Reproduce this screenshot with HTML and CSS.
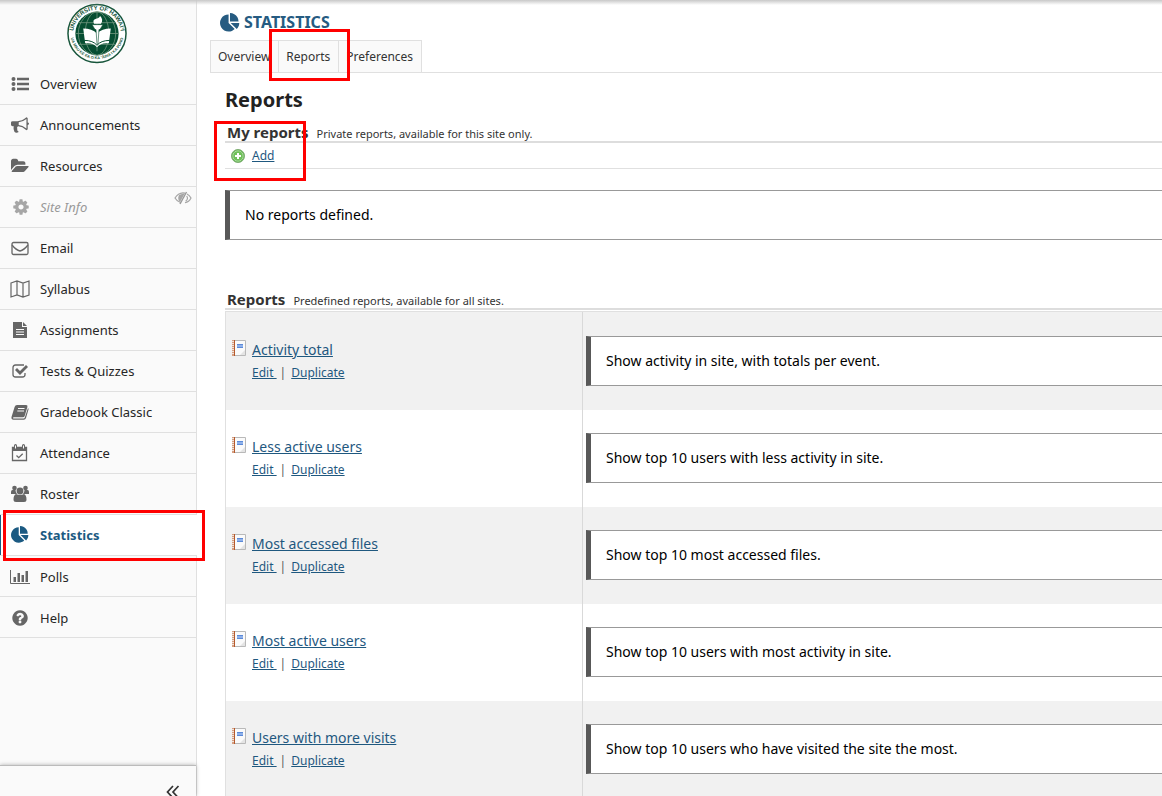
FILE: index.html
```html
<!DOCTYPE html>
<html lang="en">
<head>
<meta charset="utf-8">
<title>Statistics - Reports</title>
<link rel="stylesheet" href="styles.css">
</head>
<body>
<svg class="defs" aria-hidden="true">
  <symbol id="pie" viewBox="0 0 1792 1792"><path d="M768 890l546 546q-106 108-247.500 168t-298.500 60q-209 0-385.500-103t-279.500-279.500-103-385.500 103-385.500 279.500-279.500 385.500-103v762zm187 6h773q0 157-60 298.500t-168 247.500zm709-128h-768v-768q209 0 385.500 103t279.500 279.500 103 385.500z"/></symbol>
  <symbol id="notebook" viewBox="0 0 16 16">
    <path d="M3 .5h11.500v15H3z" fill="#fafafa" stroke="#b9b9b9"/>
    <path d="M1 0h3v16H1z" fill="#d5a083"/>
    <path d="M1 1.500h2M1 3.500h2M1 5.500h2M1 7.500h2M1 9.500h2M1 11.500h2M1 13.500h2" stroke="#f0e4dc"/>
    <path d="M3.500 0v16" stroke="#b5592c"/>
    <path d="M6 4h6v4H6z" fill="#8fb1ea"/><path d="M6 4.500h6M6 7.500h6" stroke="#5c8ad8"/>
    <path d="M9 15l5-5v5z" fill="#e4e4e4"/>
  </symbol>
</svg>
<div class="page">
  <aside class="sidebar">
    <svg class="logo" viewBox="0 0 62 62" role="img" aria-label="University of Hawaii">
      <defs><path id="arc-top" d="M7.500 37A24.200 24.200 0 1 1 54.500 37"/><path id="arc-bottom" d="M4.500 36A27.200 27.200 0 0 0 57.500 36"/></defs>
      <circle cx="31" cy="31" r="29.500" fill="#fff" stroke="#17553b" stroke-width="1.500"/>
      <circle cx="31" cy="31" r="22" fill="#064e32"/>
      <g fill="none" stroke="#71967f" stroke-width=".8"><path d="M31 9v44M9 31h44M12 20h38M12 42h38"/><ellipse cx="31" cy="31" rx="12" ry="22"/><ellipse cx="31" cy="31" rx="19" ry="22"/></g>
      <path d="M17 26q9 0 14 5q5-5 14-5l-2 15q-8-1-12 4q-4-5-12-4z" fill="#fff"/>
      <path d="M18 38q9 0 13 5q4-5 13-5" fill="none" stroke="#064e32"/>
      <path d="M26 22h11l-3 5h-1l-1 15h-1l-1-15h-1z" fill="#fff" stroke="#064e32" stroke-width=".6"/>
      <path d="M28 21q-2-4 2-5q4-1 4-3q4 4 1 8z" fill="#fff"/>
      <path d="M28 49h6l-3 4z" fill="#064e32"/>
      <text class="seal-text"><textPath href="#arc-top" startOffset="50%" text-anchor="middle">UNIVERSITY OF HAWAI‘I</textPath></text>
      <text class="seal-motto"><textPath href="#arc-bottom" startOffset="50%" text-anchor="middle">UA MAU KE EA O KA ʻĀINA I KA PONO</textPath></text>
    </svg>
    <nav>
      <ul class="tools">
        <li><a href="#"><svg viewBox="0 0 18 18"><circle cx="2.500" cy="4" r="2"/><circle cx="2.500" cy="9" r="2"/><circle cx="2.500" cy="14" r="2"/><path d="M6 2.700h12v2.600H6zM6 7.700h12v2.600H6zM6 12.700h12v2.600H6z"/></svg>Overview</a></li>
        <li><a href="#"><svg viewBox="0 0 1792 1792"><path d="M1664 640q53 0 90.500 37.500t37.500 90.500-37.500 90.500-90.500 37.500v384q0 52-38 90t-90 38q-417-347-812-380-58 19-91 66t-31 100.500 40 92.500q-20 33-23 65.500t6 58 33.500 55 48 50 61.500 50.500q-29 58-111.500 83t-168.500 11.500-132-55.500q-7-23-29.500-87.500t-32-94.500-23-89-15-101 3.500-98.500 22-110.500h-122q-66 0-113-47t-47-113v-192q0-66 47-113t113-47h480q435 0 896-384 52 0 90 38t38 90v384zm-128 604v-954q-394 302-768 343v270q377 42 768 341z"/></svg>Announcements</a></li>
        <li><a href="#"><svg viewBox="0 0 1920 1792"><path d="M1879 952q0 31-31 66l-336 396q-43 51-120.500 86.500t-143.500 35.500h-1088q-34 0-60.500-13t-26.500-43q0-31 31-66l336-396q43-51 120.500-86.500t143.500-35.500h1088q34 0 60.500 13t26.500 43zm-343-344v160h-832q-94 0-197 47.500t-164 119.500l-337 396-5 6q0-4-.5-12.500t-.5-12.500v-960q0-92 66-158t158-66h320q92 0 158 66t66 158v32h544q92 0 158 66t66 158z"/></svg>Resources</a></li>
        <li class="hidden-tool"><a href="#"><svg viewBox="-100 0 1792 1792"><path d="M1152 896q0-106-75-181t-181-75-181 75-75 181 75 181 181 75 181-75 75-181zm512-109v222q0 12-8 23t-20 13l-185 28q-19 54-39 91 35 50 107 138 10 12 10 25t-9 23q-27 37-99 108t-94 71q-12 0-26-9l-138-108q-44 23-91 38-16 136-29 186-7 28-36 28h-222q-14 0-24.500-8.500t-11.500-21.500l-28-184q-49-16-90-37l-141 107q-10 9-25 9-14 0-25-11-126-114-165-168-7-10-7-23 0-12 8-23 15-21 51-66.500t54-70.500q-27-50-41-99l-183-27q-13-2-21-12.500t-8-23.500v-222q0-12 8-23t19-13l186-28q14-46 39-92-40-57-107-138-10-12-10-24 0-10 9-23 26-36 98.500-107.500t94.500-71.500q13 0 26 10l138 107q44-23 91-38 16-136 29-186 7-28 36-28h222q14 0 24.500 8.500t11.500 21.500l28 184q49 16 90 37l142-107q9-9 24-9 13 0 25 10 129 119 165 170 7 8 7 22 0 12-8 23-15 21-51 66.500t-54 70.500q26 50 41 98l183 28q13 2 21 12.500t8 23.500z"/></svg>Site Info</a>
          <svg class="eye" viewBox="0 0 18 14"><path d="M6.500 11.500Q3 10.500 1 7q3-5 8-5.200l2 .2M13 3q2.500 1.200 4 4-2 4-6 4.700M12.700 5q2 3-1 5" fill="none" stroke="#a6a6a6" stroke-width="1.200"/><path d="M5 4l6-2-5 9q-3-3-1-7z" fill="#a6a6a6"/><path d="M12.500 1L6 13" stroke="#999" stroke-width="1.400"/></svg></li>
        <li><a href="#"><svg class="line" viewBox="0 0 18 18"><rect x="1" y="3.500" width="16" height="12" rx="1.500"/><path d="M1 6q4 5 8 6q4-1 8-6"/></svg>Email</a></li>
        <li><a href="#"><svg class="line wide" viewBox="0 0 20 18"><path d="M1 3l6-2 6 2 6-2v14l-6 2-6-2-6 2zM7 1v14M13 3v14" stroke-width="1.200"/></svg>Syllabus</a></li>
        <li><a href="#"><svg viewBox="0 0 18 18"><path d="M2 1h9v5h5v11H2zM12 1l4 4h-4z"/><path d="M5 8.500h8M5 11h8M5 13.500h8" stroke="#fafafa"/></svg>Assignments</a></li>
        <li><a href="#"><svg viewBox="0 0 18 18"><path d="M13 3H4.500Q2 3 2 5.500v7Q2 15 4.500 15h7q2.500 0 2.500-2.500V11" fill="none" stroke="#666" stroke-width="1.300"/><path d="M4 8L6 6l3 3 6-6 2 2-8 8z"/></svg>Tests &amp; Quizzes</a></li>
        <li><a href="#"><svg viewBox="0 0 18 18"><path d="M6 2h9q2 0 1.400 2l-2.700 9q-.4 1.300-2 1.300H3q-1.200 0-1 .7.200.6 1 .6h9.500q1 0 1.300-1L17 5q.8.500.5 1.500L15 15q-.5 1.700-2.200 1.700H2.500Q0 16.500.5 14L3.600 4Q4.200 2 6 2z"/><path d="M7 5.500h6.500M6.300 8H13" stroke="#fafafa"/></svg>Gradebook Classic</a></li>
        <li><a href="#"><svg viewBox="0 0 18 18"><path d="M1.500 3.500h14v13h-14z" fill="none" stroke="#666" stroke-width="1.300"/><path d="M1 3h15v4H1z"/><path d="M4.500 1.500v3M12.500 1.500v3" stroke="#666" stroke-width="3" stroke-linecap="round"/><path d="M4.500 1.500v3M12.500 1.500v3" stroke="#fafafa"/><path d="M5.500 11.500l2.200 2.200 4-4" fill="none" stroke="#666" stroke-width="1.300"/></svg>Attendance</a></li>
        <li><a href="#"><svg viewBox="0 0 18 18"><circle cx="3.500" cy="3" r="2.300"/><circle cx="14.500" cy="3" r="2.300"/><circle cx="9" cy="6" r="3.400"/><path d="M0 9V7q0-2 1.500-2h3q0 2 1.500 4zM18 9V7q0-2-1.500-2h-3q0 2-1.500 4zM5 9q4 2 8 0 2.500 1 2.500 5.500 0 2.500-2.500 2.500H5q-2.500 0-2.500-2.500Q2.500 10 5 9z"/></svg>Roster</a></li>
        <li class="current"><a href="#" aria-current="page"><svg><use href="#pie"/></svg>Statistics</a></li>
        <li><a href="#"><svg class="wide" viewBox="0 0 20 18"><path d="M.5 2v13.500H20" fill="none" stroke="#666"/><path d="M3.500 9h2.500v5H3.500zM7.500 5H10v9H7.500zM11.500 7H14v7h-2.500zM15.500 3H18v11h-2.500z"/></svg>Polls</a></li>
        <li><a href="#"><svg viewBox="0 0 1792 1792"><path d="M1024 1376v-192q0-14-9-23t-23-9h-192q-14 0-23 9t-9 23v192q0 14 9 23t23 9h192q14 0 23-9t9-23zm256-672q0-88-55.500-163t-138.500-116-170-41q-243 0-371 213-15 24 8 42l132 100q7 6 19 6 16 0 25-12 53-68 86-92 34-24 86-24 48 0 85.500 26t37.500 59q0 38-20 61t-68 45q-63 28-115.500 86.500t-52.500 125.500v36q0 14 9 23t23 9h192q14 0 23-9t9-23q0-19 21.500-49.500t54.500-49.500q32-18 49-28.500t46-35 44.500-48 28-60.500 12.500-81zm384 192q0 209-103 385.500t-279.500 279.500-385.500 103-385.500-103-279.500-279.500-103-385.500 103-385.500 279.500-279.500 385.500-103 385.500 103 279.500 279.500 103 385.500z"/></svg>Help</a></li>
      </ul>
    </nav>
    <button class="collapse" type="button" aria-label="Collapse menu"><svg viewBox="0 0 14 14"><path d="M7 1L1.500 7 7 13M12.500 1L7 7l5.500 6" fill="none" stroke="#333" stroke-width="1.700"/></svg></button>
  </aside>
  <main class="main">
    <h1 class="tool-title"><svg><use href="#pie"/></svg>STATISTICS</h1>
    <ul class="tabs">
      <li><a href="#">Overview</a></li>
      <li><a href="#">Reports</a><span class="mark mark-tab"></span></li>
      <li><a href="#">Preferences</a></li>
    </ul>
    <div class="content">
      <h2 class="page-title">Reports</h2>
      <section class="mine">
        <div class="heading"><h3>My reports</h3><span>Private reports, available for this site only.</span></div>
        <div class="actions">
          <svg viewBox="0 0 14 14"><circle cx="7" cy="7" r="6.500" fill="#58ad45" stroke="#7fae74"/><circle cx="7" cy="7" r="5.200" fill="#6fc05a" stroke="#a9dc9c"/><path d="M7 4v6M4 7h6" stroke="#fff" stroke-width="2"/></svg>
          <a href="#">Add</a>
        </div>
        <span class="mark mark-add"></span>
      </section>
      <p class="note">No reports defined.</p>
      <section class="predefined">
        <div class="heading"><h3>Reports</h3><span>Predefined reports, available for all sites.</span></div>
        <table class="reports">
          <tbody>
          <tr><td class="name"><div class="entry"><svg><use href="#notebook"/></svg><div><a class="title" href="#">Activity total</a><div class="links"><a href="#">Edit&nbsp;</a><span>|</span><a href="#">Duplicate</a></div></div></div></td><td><p class="note">Show activity in site, with totals per event.</p></td></tr>
          <tr><td class="name"><div class="entry"><svg><use href="#notebook"/></svg><div><a class="title" href="#">Less active users</a><div class="links"><a href="#">Edit&nbsp;</a><span>|</span><a href="#">Duplicate</a></div></div></div></td><td><p class="note">Show top 10 users with less activity in site.</p></td></tr>
          <tr><td class="name"><div class="entry"><svg><use href="#notebook"/></svg><div><a class="title" href="#">Most accessed files</a><div class="links"><a href="#">Edit&nbsp;</a><span>|</span><a href="#">Duplicate</a></div></div></div></td><td><p class="note">Show top 10 most accessed files.</p></td></tr>
          <tr><td class="name"><div class="entry"><svg><use href="#notebook"/></svg><div><a class="title" href="#">Most active users</a><div class="links"><a href="#">Edit&nbsp;</a><span>|</span><a href="#">Duplicate</a></div></div></div></td><td><p class="note">Show top 10 users with most activity in site.</p></td></tr>
          <tr><td class="name"><div class="entry"><svg><use href="#notebook"/></svg><div><a class="title" href="#">Users with more visits</a><div class="links"><a href="#">Edit&nbsp;</a><span>|</span><a href="#">Duplicate</a></div></div></div></td><td><p class="note">Show top 10 users who have visited the site the most.</p></td></tr>
          </tbody>
        </table>
      </section>
    </div>
  </main>
  <div class="top-shadow"></div>
</div>
</body>
</html>
```
FILE: styles.css
```css
*, *::after { box-sizing: border-box; }
body { margin: 0; font-family: "Noto Sans", "Open Sans", sans-serif; font-size: 14px; line-height: 20px; color: #111; background: #fff; }
h1, h2, h3, p, ul { margin: 0; padding: 0; }
ul { list-style: none; }
a { color: #1f587f; }
.defs { position: absolute; width: 0; height: 0; }
.page { position: relative; display: flex; height: 100vh; overflow: hidden; }
.top-shadow { position: absolute; top: 0; left: 0; right: 0; height: 5px; background: linear-gradient(#c8c8c8, rgba(220, 220, 220, 0)); }

.sidebar { display: flex; flex-direction: column; flex: none; width: 197px; padding-top: 3px; background: #fafafa; border-right: 1px solid #e0e0e0; }
.logo { display: block; flex: none; width: 62px; height: 61px; margin-left: 66px; }
.seal-text { font: bold 6px "Liberation Sans", sans-serif; fill: #17553b; }
.seal-motto { font: bold 4px "Liberation Sans", sans-serif; fill: #17553b; }
.tools li { position: relative; border-bottom: 1px solid #e0e0e0; }
.tools a { display: flex; align-items: center; height: 40px; padding-left: 11px; gap: 11px; font-size: 13px; color: #262626; text-decoration: none; }
.tools a svg { flex: none; width: 18px; height: 18px; fill: #666; }
.tools a .wide { width: 20px; margin: 0 -1px; }
.tools a .line { fill: none; stroke: #666; stroke-width: 1.3; }
.tools .hidden-tool a { color: #999; font-style: italic; }
.tools .hidden-tool a svg { fill: #a6a6a6; }
.tools .eye { position: absolute; top: 4px; right: 4px; width: 18px; height: 14px; }
.tools .current { margin-right: -1px; background: #fff; }
.tools .current a { border-left: 1px solid #1b5a82; padding-left: 10px; font-weight: bold; color: #1b5a82; }
.tools .current svg { fill: #1b5a82; }
.tools .current ~ li a { padding-top: 2px; }
.tools .current::after { content: ""; position: absolute; top: -5px; left: 3px; width: 202px; height: 51px; border: 3px solid #f00; z-index: 2; }
.collapse { display: flex; justify-content: flex-end; align-items: flex-end; flex: none; height: 31px; margin-top: auto; padding: 0 16px 0 0; border: 0; border-top: 1px solid #bbb; background: #fafafa; box-shadow: 0 0 4px rgba(0, 0, 0, .3); overflow: visible; }
.collapse svg { width: 14px; height: 14px; margin-bottom: -3px; }

.main { flex: 1; min-width: 0; padding: 12px 0 0 13px; }
.tool-title { display: flex; align-items: center; gap: 4px; height: 20px; margin: 0 0 8px 10px; font-size: 16px; line-height: 20px; color: #265b81; }
.tool-title svg { width: 20px; height: 20px; margin-top: 2px; fill: #265b81; }
.tabs { display: flex; height: 33px; border-bottom: 1px solid #e0e0e0; }
.tabs li { position: relative; border: 1px solid #e0e0e0; border-left-width: 0; border-bottom: 0; background: #fafafa; }
.tabs li:first-child { border-left-width: 1px; }
.tabs a { display: block; padding: 6px 8px 6px 7px; font-size: 12px; line-height: 20px; color: #333; text-decoration: none; }
.mark { position: absolute; border: 3px solid #f00; z-index: 2; }
.mark-tab { top: -12px; left: -10px; width: 81px; height: 52px; }
.mark-add { top: 0; left: -11px; width: 92px; height: 60px; }

.content { padding: 15px 0 0 15px; }
.page-title { margin-bottom: 9px; font-size: 20px; line-height: 24px; color: #222; }
.mine { position: relative; margin-bottom: 21px; }
.heading { display: flex; align-items: baseline; gap: 8px; height: 22px; padding-left: 2px; border-bottom: 2px solid #ddd; }
.heading h3 { font-size: 15px; line-height: 22px; color: #333; }
.heading span { font-size: 11px; color: #333; }
.actions { display: flex; align-items: center; gap: 7px; height: 26px; padding-left: 6px; border-bottom: 1px solid #e0e0e0; font-size: 12px; }
.actions svg { width: 14px; height: 14px; }
.note { padding: 14px 15px; border: 1px solid #999; border-left: 5px solid #585858; border-right: 0; line-height: 20px; color: #000; background: #fff; }
.predefined { padding-top: 48px; }
.reports { width: 100%; margin-top: 1px; border-spacing: 0; border-left: 1px solid #e0e0e0; border-top: 1px solid #e0e0e0; }
.reports tr:nth-child(odd) { background: #f1f1f1; }
.reports td { height: 97px; padding: 23px 0 23px 3px; vertical-align: top; }
.reports tr:first-child td { height: 98px; padding-top: 24px; }
.reports .name { width: 357px; padding-left: 5px; border-right: 1px solid #d9d9d9; }
.entry { display: flex; gap: 5px; padding-top: 4px; }
.entry svg { width: 16px; height: 16px; }
.title { display: block; line-height: 20px; margin-bottom: 4px; }
.links { display: flex; gap: 3px; font-size: 12px; line-height: 18px; color: #555; }
.links span { padding-right: 2px; }
```
